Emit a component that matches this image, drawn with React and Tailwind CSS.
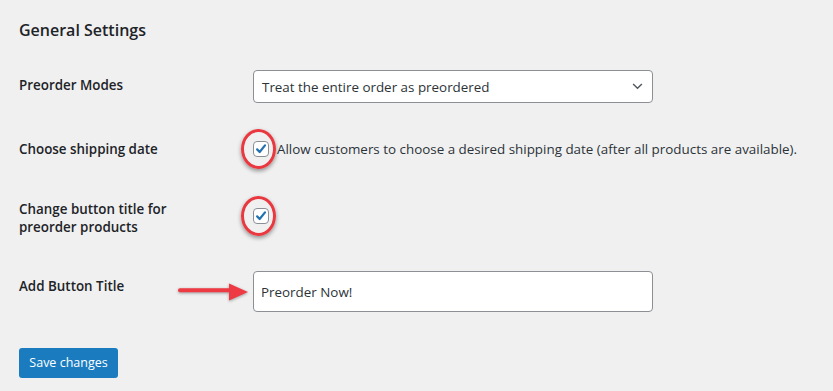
import React from "react";

function Check() {
  return (
    <span className="relative inline-flex h-4 w-4 shrink-0 items-center justify-center rounded-[4px] border border-[#8c8f94] bg-white">
      <svg viewBox="0 0 20 20" className="h-[16px] w-[16px]">
        <path d="M4.5 10.5l3.6 3.7 7.6-9.4" fill="none" stroke="#2271b1" strokeWidth="3.2" strokeLinecap="round" strokeLinejoin="round" />
      </svg>
      <span className="pointer-events-none absolute left-[-13px] top-[-13px] h-[40px] w-[35px] rounded-[50%] border-[3px] border-[#e9383f] shadow-[0_2px_4px_rgba(0,0,0,0.4)]" />
    </span>
  );
}

export default function App() {
  return (
    <div className="min-h-[391px] w-[833px] bg-[#f0f0f1] pl-[19px] pt-[19px] text-[13.4px] leading-[18px] text-[#1d2327]" style={{ fontFamily: '"Open Sans", "Noto Sans", sans-serif' }}>
      <h2 className="text-[16px] font-semibold leading-[23px] text-[#1d2327]">General Settings</h2>

      <div className="mt-[28px] flex">
        <div className="w-[234px] pt-[6px] font-semibold">Preorder Modes</div>
        <div className="flex h-[33px] w-[400px] items-center justify-between rounded-[4px] border border-[#8c8f94] bg-white pl-[8px] pr-[9px] text-[#2c3338]">
          <span>Treat the entire order as preordered</span>
          <svg viewBox="0 0 12 8" className="h-[7px] w-[11px]">
            <path d="M1 1.2l5 4.8 5-4.8" fill="none" stroke="#50575e" strokeWidth="1.6" />
          </svg>
        </div>
      </div>

      <div className="mt-[37px] flex items-center">
        <div className="w-[234px] font-semibold">Choose shipping date</div>
        <Check />
        <span className="ml-[8px] text-[#2c3338]">Allow customers to choose a desired shipping date (after all products are available).</span>
      </div>

      <div className="mt-[42px] flex items-start">
        <div className="w-[234px] font-semibold">
          Change button title for
          <br />
          preorder products
        </div>
        <div className="mt-[8px]">
          <Check />
        </div>
      </div>

      <div className="relative mt-[35px] flex items-start">
        <div className="w-[234px] pt-[6px] font-semibold">Add Button Title</div>
        <svg viewBox="0 0 74 22" className="absolute left-[158px] top-[10px] h-[22px] w-[74px]" style={{ filter: "drop-shadow(0 1px 1.5px rgba(0,0,0,0.35))" }}>
          <path d="M3 9.2h52" stroke="#ee3a42" strokeWidth="4" strokeLinecap="round" />
          <path d="M52 2.5l19 8.5-19 8.5z" fill="#ee3a42" />
        </svg>
        <div className="flex h-[41px] w-[400px] items-center rounded-[4px] border border-[#8c8f94] bg-white px-[7px] text-[#2c3338]">
          Preorder Now!
        </div>
      </div>

      <button className="mt-[36px] flex h-[30px] w-[99px] items-center justify-center rounded-[3px] bg-[#1a7cbf] text-[12.5px] text-white">
        Save changes
      </button>
    </div>
  );
}
